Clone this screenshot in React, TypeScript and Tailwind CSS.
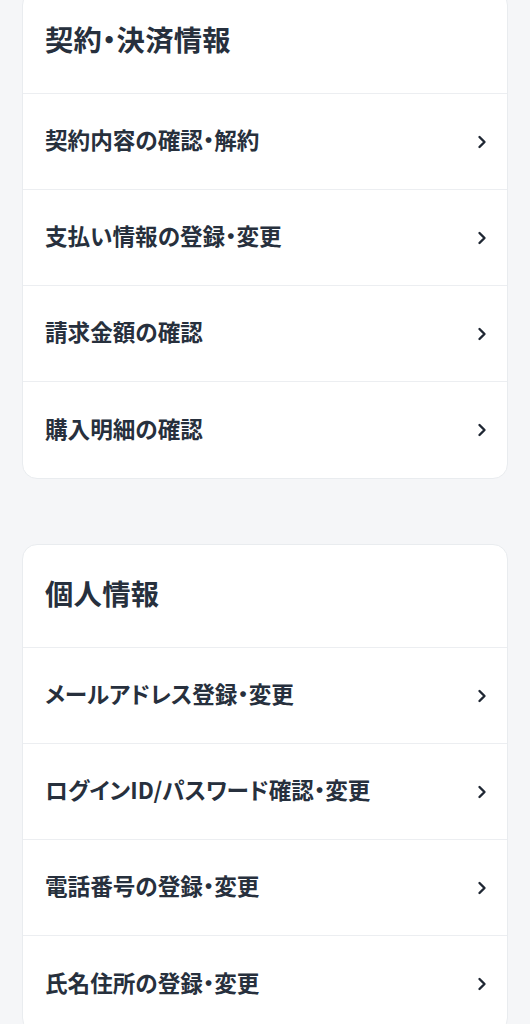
import React from 'react';

interface Section {
  title: string;
  items: string[];
}

const sections: Section[] = [
  {
    title: '契約・決済情報',
    items: ['契約内容の確認・解約', '支払い情報の登録・変更', '請求金額の確認', '購入明細の確認'],
  },
  {
    title: '個人情報',
    items: ['メールアドレス登録・変更', 'ログインID/パスワード確認・変更', '電話番号の登録・変更', '氏名住所の登録・変更'],
  },
];

const Chevron: React.FC = () => (
  <svg width="10" height="14" viewBox="0 0 10 14" fill="none" className="shrink-0">
    <polyline points="2.5,2 7.5,7 2.5,12" stroke="#1f2733" strokeWidth="2.4" strokeLinecap="round" strokeLinejoin="round" />
  </svg>
);

const SectionCard: React.FC<{ section: Section }> = ({ section }) => (
  <div className="bg-white rounded-[15px] border border-[#e9ecef] overflow-hidden">
    {/* Header */}
    <div className="h-[103px] flex items-center px-[22px] pb-[5px] border-b border-[#eceef1]">
      <h2 className="text-[28.3px] font-bold text-[#27303d] tracking-[0.01em]">{section.title}</h2>
    </div>
    {/* Rows */}
    {section.items.map((item, i) => (
      <div
        key={item}
        className={`h-[96px] flex items-center justify-between pl-[22px] pr-[20px] ${
          i < section.items.length - 1 ? 'border-b border-[#eceef1]' : ''
        }`}
      >
        <span className="text-[22.6px] font-bold text-[#27303d] pb-[3px]">{item}</span>
        <Chevron />
      </div>
    ))}
  </div>
);

export default function App() {
  return (
    <div
      className="min-h-screen bg-[#f5f6f8] px-[22px] overflow-hidden [font-feature-settings:'palt'] font-['Noto_Sans_CJK_JP','Noto_Sans',sans-serif]"
    >
      <div className="-mt-[10px] flex flex-col gap-[65px]">
        {sections.map((s) => (
          <SectionCard key={s.title} section={s} />
        ))}
      </div>
    </div>
  );
}
